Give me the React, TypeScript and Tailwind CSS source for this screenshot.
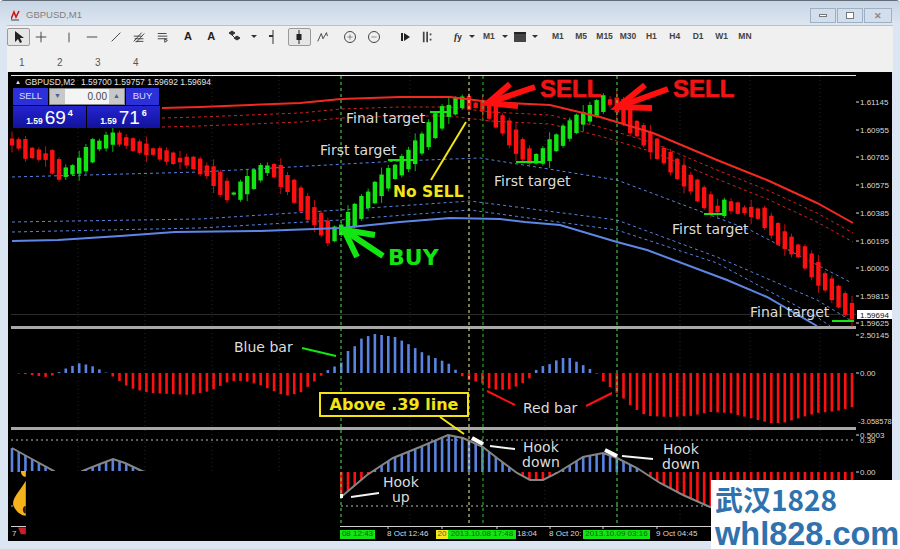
import { Minus, Plus } from 'lucide-react';

type Pt = [number, number];

const GREEN = '#12e512';
const RED = '#ff1010';
const BLUE = '#5a82e0';

const interp = (pts: Pt[], x: number) => {
  if (x <= pts[0][0]) return pts[0][1];
  for (let i = 1; i < pts.length; i++) {
    if (x <= pts[i][0]) {
      const [x0, y0] = pts[i - 1];
      const [x1, y1] = pts[i];
      return y0 + ((y1 - y0) * (x - x0)) / (x1 - x0);
    }
  }
  return pts[pts.length - 1][1];
};

const toPath = (pts: Pt[]) => pts.map((p) => p.join(',')).join(' ');
const shift = (pts: Pt[], d: number): Pt[] => pts.map(([x, y]) => [x, y + d]);

const price: Pt[] = [
  [12, 142], [18, 145], [25, 152], [45, 157], [58, 173], [65, 172], [78, 165], [92, 147], [112, 137], [120, 140],
  [130, 145], [160, 155], [175, 160], [190, 162], [210, 175], [225, 193], [232, 195], [250, 180], [262, 168], [272, 170],
  [290, 190], [310, 215], [328, 236], [341, 228], [360, 205], [385, 178], [410, 155], [440, 115], [460, 100], [470, 105],
  [485, 108], [500, 125], [515, 145], [530, 160], [540, 157], [560, 135], [580, 118], [605, 100], [617, 107], [630, 125],
  [650, 145], [680, 175], [700, 197], [715, 212], [725, 205], [740, 210], [760, 215], [775, 235], [800, 255], [820, 280], [852, 315],
];

const redTop: Pt[] = [
  [162, 108], [200, 107], [300, 103], [341, 99], [400, 97], [450, 97], [490, 102], [550, 105], [600, 117], [653, 133],
  [717, 160], [767, 180], [817, 203], [853, 223],
];
const blueMain: Pt[] = [
  [12, 241], [58, 240], [120, 236], [175, 232], [260, 231], [341, 228], [400, 222], [450, 218], [500, 219], [525, 222],
  [560, 225], [617, 242], [647, 250], [727, 280], [767, 297], [817, 326],
];
const blueUpper: Pt[] = [[12, 177], [200, 172], [400, 161], [480, 158], [617, 180], [750, 230], [850, 282]];
const blueMid: Pt[] = [[12, 222], [200, 219], [340, 210], [470, 201], [617, 220], [717, 257], [817, 300], [850, 320]];
const blueLow: Pt[] = [[12, 232], [200, 228], [340, 220], [470, 210], [617, 230], [717, 263], [817, 317], [830, 326]];

const hist: Pt[] = [
  [12, 0], [25, -1], [45, -4], [55, -2], [62, 3], [80, 10], [92, 7], [105, 1], [112, -3], [130, -15], [150, -20], [190, -22],
  [210, -18], [230, -8], [245, -8], [260, -12], [285, -23], [300, -20], [315, -8], [322, -2], [328, 3], [341, 10], [348, 22],
  [355, 27], [362, 35], [375, 39], [395, 36], [410, 28], [425, 19], [448, 10], [458, 1], [465, -6], [482, -10], [490, -16],
  [500, -17], [510, -16], [520, -12], [530, -5], [534, 0], [536, 3], [543, 7], [550, 9], [557, 13], [563, 15], [570, 15],
  [577, 11], [583, 8], [590, 4], [597, -1], [603, -8], [610, -14], [617, -20], [623, -25], [630, -32], [637, -37], [643, -41],
  [650, -43], [670, -44], [690, -43], [710, -39], [730, -40], [750, -45], [770, -50], [783, -50], [803, -44], [817, -40], [837, -38], [853, -34],
];

const osc: Pt[] = [
  [12, 448], [30, 458], [54, 471], [62, 478], [75, 478], [82, 471], [100, 464], [113, 459], [125, 463], [142, 471], [200, 490], [300, 505], [341, 497],
  [367, 475], [393, 458], [420, 447], [448, 435], [463, 438], [483, 447], [497, 458], [517, 473], [530, 480], [543, 480],
  [557, 473], [570, 465], [583, 457], [603, 453], [617, 458], [637, 468], [660, 483], [683, 495], [710, 507], [760, 515], [852, 520],
];

const barXs = Array.from({ length: 126 }, (_, i) => 12 + i * 6.72);

function Candles() {
  return (
    <g>
      {barXs.map((x, i) => {
        const open = interp(price, x - 6.72);
        const close = interp(price, x);
        const up = close < open;
        const d = Math.abs(open - close);
        const ext = d * 0.5 + (i % 4 === 1 ? 1 : 3.5);
        const top = Math.min(open, close) - ext;
        const h = d + ext * 2;
        const wick = i % 5 === 0 ? 7 : 1 + (i % 3);
        const color = up ? GREEN : RED;
        return (
          <g key={x}>
            <line x1={x} x2={x} y1={top - wick} y2={top + h + wick} stroke={color} strokeWidth="1" opacity="0.8" />
            <rect x={x - 2.2} y={top} width="4.4" height={h} fill={color} />
          </g>
        );
      })}
    </g>
  );
}

function Grid({ y1, y2 }: { y1: number; y2: number }) {
  return (
    <g stroke="#262626" strokeDasharray="1 3">
      {[78, 145, 212, 279, 410, 545, 680, 750, 820].map((x) => (
        <line key={x} x1={x} x2={x} y1={y1} y2={y2} />
      ))}
    </g>
  );
}

function AxisLabel({ y, children }: { y: number; children: string }) {
  return (
    <g>
      <line x1="856" x2="859" y1={y} y2={y} stroke="#ddd" />
      <text x="860" y={y + 3} fontSize="8" fill="#d8d8d8" fontFamily="Liberation Sans, sans-serif">
        {children}
      </text>
    </g>
  );
}

function PricePane() {
  return (
    <svg viewBox="8 72 884 254" className="block w-[884px] h-[254px] overflow-visible">
      <Grid y1={76} y2={326} />
      <line x1="11" x2="856" y1="75.5" y2="75.5" stroke="#e8e8e8" />
      <line x1="11" x2="856" y1="314.5" y2="314.5" stroke="#2c2c2c" />
      <polyline points={toPath(blueUpper)} fill="none" stroke={BLUE} strokeWidth="1" strokeDasharray="3 3" />
      <polyline points={toPath(blueMid)} fill="none" stroke={BLUE} strokeWidth="1" strokeDasharray="3 3" />
      <polyline points={toPath(blueLow)} fill="none" stroke={BLUE} strokeWidth="1" strokeDasharray="3 3" />
      <polyline points={toPath(shift(redTop, 10))} fill="none" stroke="#d42020" strokeWidth="1" strokeDasharray="3 3" />
      <polyline points={toPath(shift(redTop, 19))} fill="none" stroke="#d42020" strokeWidth="1" strokeDasharray="3 3" />
      <Candles />
      <polyline points={toPath(redTop)} fill="none" stroke="#f02a20" strokeWidth="2" />
      <polyline points={toPath(blueMain)} fill="none" stroke="#5f86e6" strokeWidth="2" />
      {[
        ['1.61145', 102], ['1.60955', 130], ['1.60765', 157], ['1.60575', 185], ['1.60385', 213],
        ['1.60195', 241], ['1.60005', 268], ['1.59815', 296], ['1.59625', 323],
      ].map(([t, y]) => (
        <AxisLabel key={t} y={y as number}>{t as string}</AxisLabel>
      ))}
      <rect x="857" y="310" width="35" height="9" fill="#fff" />
      <text x="860" y="318" fontSize="8" fill="#111" fontFamily="Liberation Sans, sans-serif">1.59694</text>
    </svg>
  );
}

function HistPane() {
  return (
    <svg viewBox="8 329 884 98" className="block w-[884px] h-[98px]">
      <Grid y1={329} y2={427} />
      {barXs.map((x) => {
        const v = interp(hist, x);
        return (
          <line key={x} x1={x} x2={x} y1="373" y2={373 - v} stroke={v >= 0 ? BLUE : RED} strokeWidth="2.6" />
        );
      })}
      <AxisLabel y={335}>2.50145</AxisLabel>
      <AxisLabel y={373}>0.00</AxisLabel>
      <text x="858" y="424" fontSize="7.5" fill="#d8d8d8" fontFamily="Liberation Sans, sans-serif">-3.058578</text>
    </svg>
  );
}

function OscPane() {
  return (
    <svg viewBox="8 430 884 96" className="block w-[884px] h-[96px]">
      <Grid y1={430} y2={526} />
      <line x1="11" x2="856" y1="440" y2="440" stroke="#bbb" strokeDasharray="2 3" />
      <line x1="11" x2="856" y1="506" y2="506" stroke="#bbb" strokeDasharray="2 3" />
      {barXs.map((x) => {
        const y = interp(osc, x);
        return <line key={x} x1={x} x2={x} y1="472" y2={y} stroke={y < 472 ? BLUE : RED} strokeWidth="2.6" />;
      })}
      <polyline points={toPath(osc)} fill="none" stroke="#858585" strokeWidth="2" />
      <AxisLabel y={435}>0.5003</AxisLabel>
      <text x="860" y="443" fontSize="8" fill="#d8d8d8" fontFamily="Liberation Sans, sans-serif">0.39</text>
      <AxisLabel y={472}>0.00</AxisLabel>
    </svg>
  );
}

function TimeAxis() {
  const tag = 'h-[9px] bg-[#12e512] text-[#0b5f0b] flex items-center justify-center';
  return (
    <div className="relative h-[15px] ml-[3px] mr-[36px] border-t border-[#cfcfcf] flex items-center text-[8px] leading-none text-[#d8d8d8] whitespace-nowrap font-['Liberation_Sans',sans-serif]">
      <span className="pl-[1px] w-[329px]">7</span>
      <span className={tag + ' w-[35px]'}>08 12:43</span>
      <span className="ml-[12px] w-[49px]">8 Oct 12:46</span>
      <span className="w-[12px] h-[9px] bg-[#f4e816] text-[#555] flex items-center justify-center">20</span>
      <span className={tag + ' w-[68px]'}>2013.10.08 17:48</span>
      <span className="ml-[1px] w-[32px]">18:04</span>
      <span className="w-[34px] overflow-hidden">8 Oct 20:</span>
      <span className={tag + ' w-[67px]'}>2013.10.09 03:16</span>
      <span className="ml-[6px]">9 Oct 04:45</span>
    </div>
  );
}

function Arrow({ tip, tail, a, b, color }: { tip: Pt; tail: Pt; a: Pt; b: Pt; color: string }) {
  return (
    <g stroke={color} strokeWidth="6" fill="none">
      <line x1={tip[0]} y1={tip[1]} x2={tail[0]} y2={tail[1]} />
      <polyline points={toPath([a, tip, b])} strokeLinejoin="miter" />
    </g>
  );
}

const labels: [string, number, number][] = [
  ['Final target', 346, 123],
  ['First target', 320, 155],
  ['First target', 494, 186],
  ['First target', 672, 234],
  ['Final target', 750, 317],
  ['Blue bar', 234, 352],
  ['Red bar', 523, 413],
  ['Hook', 383, 487],
  ['up', 392, 502],
  ['Hook', 523, 452],
  ['down', 522, 467],
  ['Hook', 663, 454],
  ['down', 662, 469],
];

const segs: [number, number, number, number, string, number][] = [
  [430, 112, 448, 112, GREEN, 2],
  [388, 160, 416, 160, GREEN, 2],
  [516, 162, 544, 162, GREEN, 2],
  [704, 214, 726, 214, GREEN, 2],
  [832, 321, 854, 321, GREEN, 2],
  [302, 348, 336, 356, GREEN, 2],
  [487, 391, 515, 405, RED, 2],
  [586, 406, 612, 393, RED, 2],
  [431, 180, 466, 122, '#f2e415', 2],
  [440, 417, 464, 434, '#f2e415', 2],
  [472, 438, 483, 444, '#fff', 4],
  [490, 446, 515, 449, '#f4f4f4', 2],
  [605, 450, 617, 456, '#fff', 4],
  [622, 456, 653, 459, '#f4f4f4', 2],
  [351, 497, 379, 493, '#f4f4f4', 2],
];

// annotations drawn on top of the chart
function Annotations() {
  return (
    <svg viewBox="8 72 884 469" className="absolute inset-0 w-[884px] h-[469px] pointer-events-none">
      <g strokeWidth="1" strokeDasharray="3 3">
        <line x1="341" x2="341" y1="76" y2="526" stroke="#5fe35f" />
        <line x1="469" x2="469" y1="76" y2="526" stroke="#f5f2a0" />
        <line x1="483" x2="483" y1="76" y2="526" stroke="#2fc82f" />
        <line x1="617" x2="617" y1="76" y2="526" stroke="#5fe35f" />
      </g>
      <g stroke="#cfcfcf">
        {[388, 442, 497, 550, 603, 657].map((x) => (
          <line key={x} x1={x} x2={x} y1="526" y2="529" />
        ))}
      </g>
      {segs.map(([x1, y1, x2, y2, c, w]) => (
        <line key={`${x1}-${y1}`} x1={x1} y1={y1} x2={x2} y2={y2} stroke={c} strokeWidth={w} />
      ))}
      <rect x="339" y="494" width="4" height="4" fill="#fff" />
      <Arrow tip={[488, 103]} tail={[535, 87]} a={[510, 84]} b={[518, 106]} color="#ff1010" />
      <Arrow tip={[618, 107]} tail={[668, 89]} a={[645, 85]} b={[652, 108]} color="#ff1010" />
      <Arrow tip={[344, 230]} tail={[383, 256]} a={[375, 235]} b={[357, 257]} color="#12e512" />
      <g fontFamily="Liberation Sans, sans-serif" fontWeight="700" fontSize="24" fill="#f01414" stroke="#f01414" strokeWidth="0.6">
        <text x="540" y="97">SELL</text>
        <text x="673" y="97">SELL</text>
      </g>
      <text x="388" y="265" fontFamily="DejaVu Sans, sans-serif" fontWeight="700" fontSize="22" fill="#12e512">BUY</text>
      <text x="393" y="197" fontFamily="DejaVu Sans, sans-serif" fontWeight="700" fontSize="15.5" fill="#f2e415">No SELL</text>
      <g fontFamily="DejaVu Sans, sans-serif" fontSize="14" fill="#dcdcdc">
        {labels.map(([t, x, y]) => (
          <text key={`${t}-${x}`} x={x} y={y}>{t}</text>
        ))}
      </g>
    </svg>
  );
}

function TradePanel() {
  return (
    <div className="absolute left-[5px] top-[4px] w-[150px] font-['Liberation_Sans',sans-serif] text-white">
      <div className="h-[12px] pl-[2px] flex items-center gap-[4px] text-[8.5px] leading-none text-[#e4e4e4] whitespace-nowrap">
        <span className="text-[6px]">▲</span>
        <span>GBPUSD,M2</span>
        <span className="ml-[2px]">1.59700 1.59757 1.59692 1.59694</span>
      </div>
      <div className="flex items-stretch h-[17px] gap-[1px]">
        <div className="w-[35px] bg-[#2b30d8] text-[9.5px] text-[#d8dcff] flex items-center justify-center">SELL</div>
        <div className="w-[76px] bg-[#f4f4f4] flex items-center border border-[#888]">
          <div className="w-[15px] h-full bg-[#c8c8c8] text-[#4a5a9a] text-[7px] flex items-center justify-center">▼</div>
          <div className="flex-1 text-right pr-[2px] text-[10px] text-[#444]">0.00</div>
          <div className="w-[15px] h-full bg-[#c8c8c8] text-[#4a5a9a] text-[7px] flex items-center justify-center">▲</div>
        </div>
        <div className="w-[33px] bg-[#2b30d8] text-[9.5px] text-[#d8dcff] flex items-center justify-center">BUY</div>
      </div>
      <div className="flex h-[22px] gap-[1px] mt-[1px]">
        <div className="w-[73px] bg-gradient-to-b from-[#2424d0] to-[#12129c] flex items-baseline justify-center gap-[2px] leading-none pt-[2px]">
          <span className="text-[8.5px] font-bold">1.59</span>
          <span className="text-[19px]">69</span>
          <span className="text-[9px] font-bold self-start mt-[1px]">4</span>
        </div>
        <div className="w-[73px] bg-gradient-to-b from-[#2424d0] to-[#12129c] flex items-baseline justify-center gap-[2px] leading-none pt-[2px]">
          <span className="text-[8.5px] font-bold">1.59</span>
          <span className="text-[19px]">71</span>
          <span className="text-[9px] font-bold self-start mt-[1px]">6</span>
        </div>
      </div>
    </div>
  );
}

const tw = 'w-[23.4px] h-[18px] flex items-center justify-center shrink-0';
const ink = '#333';

function Tool({ d, selected, children }: { d?: string; selected?: boolean; children?: React.ReactNode }) {
  return (
    <div className={selected ? tw + ' border border-[#9a9a9a] rounded-[2px] bg-[#e6e6e6]' : tw}>
      {children ?? (
        <svg width="14" height="14" viewBox="0 0 16 16" fill="none" stroke={ink} strokeWidth="1">
          <path d={d} />
        </svg>
      )}
    </div>
  );
}

const Caret = () => <div className="w-0 h-0 border-x-[3px] border-x-transparent border-t-[3px] border-t-[#333]" />;

function Toolbar() {
  const periods = ['M1', 'M5', 'M15', 'M30', 'H1', 'H4', 'D1', 'W1', 'MN'];
  const label = "text-[8.5px] text-[#444] font-['Liberation_Sans',sans-serif] font-bold";
  return (
    <div className="mx-[7px] h-[47px] bg-[#f0f0f0] border-t border-[#b8c0cc] pt-[1px]">
      <div className="flex items-center h-[19px]">
        <Tool selected>
          <svg width="12" height="14" viewBox="0 0 12 14" fill="#222"><path d="M2 1v11l3-3 2 4 2-1-2-4h4z" /></svg>
        </Tool>
        <div className="shrink-0 -ml-[1.5px]" />
        <Tool d="M8 2v12M2 8h12" />
        <div className="w-[5px] shrink-0" />
        <Tool d="M8 3v11" />
        <Tool d="M2 8h12" />
        <Tool d="M3 13L13 3" />
        <Tool d="M2 13L11 3M5 14L14 4M2 7h9M3 10h10M4 13h9" />
        <Tool d="M2 4h10M2 7h11M2 10h11M13 12l-3-2v4z" />
        <div className="w-[2px] shrink-0" />
        <Tool><span className="text-[11px] font-bold text-[#222] font-['Liberation_Sans',sans-serif]">A</span></Tool>
        <Tool><span className="text-[11px] font-bold text-[#222] font-['Liberation_Sans',sans-serif]">A</span></Tool>
        <Tool>
          <svg width="16" height="16" viewBox="0 0 16 16" fill="#333"><path d="M2 4l3-2 3 2-3 2zM7 9l3-2 3 2-3 2zM5 6l3 3" stroke="#333" /></svg>
        </Tool>
        <div className="w-[15px] shrink-0 flex justify-center"><Caret /></div>
        <Tool>
          <svg width="14" height="16" viewBox="0 0 14 16" fill="#333"><path d="M7 1v14" stroke="#333" /><rect x="3" y="6" width="4" height="2" /></svg>
        </Tool>
        <div className="w-[3px] shrink-0" />
        <Tool selected>
          <svg width="12" height="16" viewBox="0 0 12 16" fill="#222"><path d="M6 1v14" stroke="#222" /><rect x="3.5" y="5" width="5" height="6" /></svg>
        </Tool>
        <Tool d="M2 13L6 4l2 6 4-7 1 4" />
        <div className="w-[4px] shrink-0" />
        <Tool>
          <span className="w-[12px] h-[12px] rounded-full border border-[#444] flex items-center justify-center"><Plus size={8} strokeWidth={1.5} color="#333" /></span>
        </Tool>
        <Tool>
          <span className="w-[12px] h-[12px] rounded-full border border-[#444] flex items-center justify-center"><Minus size={8} strokeWidth={1.5} color="#333" /></span>
        </Tool>
        <div className="w-[8px] shrink-0" />
        <Tool>
          <svg width="12" height="14" viewBox="0 0 12 14" fill="#222"><path d="M2 3h2v8H2zM5 3l6 4-6 4z" /></svg>
        </Tool>
        <Tool>
          <svg width="12" height="14" viewBox="0 0 14 14" fill="#444"><path d="M1 1h2v12H1zM5 1h2v12H5zM9 3h2v2H9zM9 9h2v2H9z" /></svg>
        </Tool>
        <div className="w-[6px] shrink-0" />
        <div className={tw}><span className="text-[10px] italic font-bold text-[#333] font-['Liberation_Serif',serif]">f</span><span className="text-[8px] font-bold text-[#333]">y</span></div>
        <div className="w-[5px] shrink-0 flex justify-center"><Caret /></div>
        <div className="w-[2.6px] shrink-0" />
        <div className={tw}><span className={label}>M1</span></div>
        <div className="w-[8px] shrink-0 flex justify-center"><Caret /></div>
        <div className="w-[22px] h-[18px] shrink-0 flex items-center justify-center">
          <div className="w-[12px] h-[10px] bg-[#444] border-t-2 border-[#222]" />
        </div>
        <div className="w-[8px] shrink-0 flex justify-center"><Caret /></div>
        <div className="w-[7.6px] shrink-0" />
        {periods.map((p) => (
          <div key={p} className={tw}><span className={label}>{p}</span></div>
        ))}
      </div>
      <div className="flex h-[20px] mt-[6px] items-center pl-[12px] text-[10px] text-[#555] font-['Liberation_Sans',sans-serif]">
        {[1, 2, 3, 4].map((n) => (
          <span key={n} className="w-[38px]">{n}</span>
        ))}
      </div>
    </div>
  );
}

function TitleBar() {
  return (
    <div className="h-[24px] pt-[4px] flex items-center justify-between pl-[11px] pr-[8px] bg-gradient-to-b from-[#c7d5e4] to-[#dde6f1]">
      <div className="flex items-center gap-[6px]">
        <svg width="9" height="11" viewBox="0 0 9 11">
          <path d="M0 9L3 2l2 5 3-6" fill="none" stroke="#d01818" strokeWidth="1.6" />
          <path d="M0 10h8" stroke="#444" />
        </svg>
        <span className="text-[9.5px] text-[#808080] font-['Liberation_Sans',sans-serif]">GBPUSD,M1</span>
      </div>
      <div className="flex gap-[1px]">
        <div className="w-[26px] h-[15px] border border-[#9db0c4] bg-[#d2deeb] flex items-center justify-center">
          <div className="w-[8px] h-[3px] border border-[#777] bg-white" />
        </div>
        <div className="w-[26px] h-[15px] border border-[#9db0c4] bg-[#d2deeb] flex items-center justify-center">
          <div className="w-[8px] h-[7px] border border-[#777] bg-white" />
        </div>
        <div className="w-[28px] h-[15px] border border-[#9db0c4] bg-[#d2deeb] flex items-center justify-center text-[9px] font-bold text-[#888] leading-none">✕</div>
      </div>
    </div>
  );
}

export default function App() {
  return (
    <div className="relative w-[900px] h-[549px] overflow-hidden bg-[#dbe6f2] border-t border-[#5f6b78] rounded-t-[4px]">
      <TitleBar />
      <Toolbar />
      <div className="relative mx-[8px] h-[469px] bg-black">
        <PricePane />
        <div className="h-[3px] ml-[3px] mr-[36px] bg-[#a8a8a8]" />
        <HistPane />
        <div className="h-[3px] ml-[3px] mr-[36px] bg-[#a8a8a8]" />
        <OscPane />
        <TimeAxis />
        <Annotations />
        <TradePanel />

        {/* Above .39 line callout */}
        <div className="absolute left-[311px] top-[320px] w-[150px] h-[25px] border-2 border-[#f2e415] bg-black text-[#f2e415] font-bold text-[16px] leading-none flex items-center justify-center font-['DejaVu_Sans',sans-serif] whitespace-nowrap">
          Above .39 line
        </div>

        {/* covered part of the picture */}
        <div className="absolute left-[18px] top-[399px] w-[314px] h-[70px] bg-black" />
        <svg viewBox="0 0 14 72" className="absolute left-[4px] top-[399px] w-[14px] h-[70px]">
          <path d="M9 0h5v6C11 6 9 4 9 0z" fill="#f6b21a" />
          <path d="M14 10v36c-5 0-11-5-13-11 -1-8 7-14 13-25z" fill="#f6b21a" />
          <path d="M14 36c-3 0-4 4-2 7l2 1z" fill="#2a1a00" />
          <path d="M6 58h8v7H9z" fill="#c8202a" />
        </svg>
      </div>

      {/* site watermark */}
      <div className="absolute left-[711px] top-[479px] w-[189px] h-[70px] bg-white pl-[4px] overflow-hidden text-[#2f72ad] font-bold leading-none whitespace-nowrap">
        <div className="text-[28px] h-[36px] pt-[5px] font-['Noto_Sans_CJK_SC','Liberation_Sans',sans-serif]">武汉1828</div>
        <div className="text-[32.5px] pt-[2px] font-['Liberation_Sans',sans-serif]">whl828.com</div>
      </div>
    </div>
  );
}
